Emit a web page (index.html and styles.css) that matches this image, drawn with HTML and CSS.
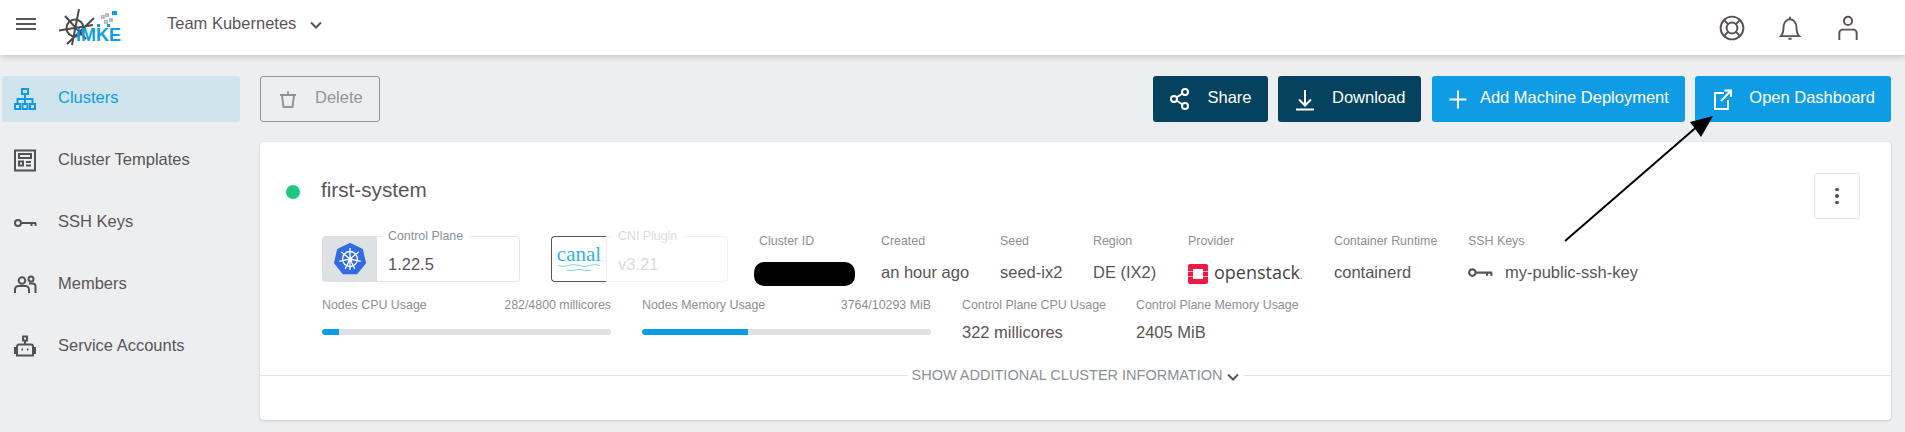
FILE: index.html
```html
<!DOCTYPE html>
<html lang="en">
<head>
    <meta charset="UTF-8">
    <title>Clusters</title>
    <link rel="stylesheet" href="styles.css">
</head>
<body>

<header class="topbar">
    <svg class="menu-icon" viewBox="0 0 20 12"><path d="M0 1h20M0 6h20M0 11h20"/></svg>
    <div class="logo">
        <svg class="logo-mark" viewBox="0 0 62 38">
            <circle cx="16" cy="19" r="8.500"/>
            <path d="M20 0L13 36M0 21.500L34 16M6 7L27 30M35 9L8 35"/>
            <g class="logo-pixels">
                <rect x="42" y="6" width="4" height="4"/>
                <rect x="46" y="4" width="4" height="4"/>
                <rect x="45" y="11" width="4" height="4"/>
                <rect x="50" y="9" width="4" height="4"/>
                <rect class="logo-blue" x="53" y="2" width="5" height="4"/>
                <rect class="logo-blue" x="38" y="15" width="3" height="3"/>
                <rect class="logo-blue" x="48" y="15" width="3" height="3"/>
            </g>
        </svg>
        <span class="logo-text">iMKE</span>
    </div>
    <div class="team">Team Kubernetes
        <svg class="team-chevron" viewBox="0 0 12 8"><path d="M1 1.500l5 5 5-5"/></svg>
    </div>
    <div class="topbar-icons">
        <svg viewBox="0 0 24 24"><circle cx="12" cy="12" r="10.500"/><circle cx="12" cy="12" r="5"/><path d="M5 5l3.500 3.500M19 5l-3.500 3.500M5 19l3.500-3.500M19 19l-3.500-3.500"/></svg>
        <svg viewBox="0 0 24 24"><path d="M3.500 19.500c2-2 2.500-3.500 2.500-8 0-4 2.500-7.500 6-7.500s6 3.500 6 7.500c0 4.500.5 6 2.500 8zM12 1.500V4M10.500 22h3"/></svg>
        <svg viewBox="0 0 24 24"><circle cx="12" cy="5.500" r="3.800"/><path d="M4 23v-6.500a3 3 0 0 1 3-3h10a3 3 0 0 1 3 3V23"/></svg>
    </div>
</header>

<div class="page">
    <nav class="sidebar">
        <a class="nav-item active">
            <svg viewBox="0 0 24 24"><path d="M9 2h6v5H9zM2 17h5v5H2zM9.500 17h5v5h-5zM17 17h5v5h-5zM12 7v10M4.500 17v-5h15v5"/></svg>
            Clusters
        </a>
        <a class="nav-item">
            <svg viewBox="0 0 24 24"><path d="M2 1.500h20v20H2zM6 5h12v4H6zM6 12.500h4v4H6zM13 13h5M13 16.500h5"/></svg>
            Cluster Templates
        </a>
        <a class="nav-item">
            <svg viewBox="0 0 24 24"><circle cx="5" cy="12" r="3"/><path d="M8 12h15M18.500 12v3M22.500 12v3"/></svg>
            SSH Keys
        </a>
        <a class="nav-item">
            <svg viewBox="0 0 24 24"><circle cx="9" cy="7.500" r="3.300"/><circle cx="18" cy="6" r="2.500"/><path d="M2 20v-3.500a3.500 3.500 0 0 1 3.500-3.500h7a3.500 3.500 0 0 1 3.500 3.500V20M16 10.500h3.500a3 3 0 0 1 3 3V20"/></svg>
            Members
        </a>
        <a class="nav-item">
            <svg viewBox="0 0 24 24"><path d="M10 1.500h4v4h-4zM12 5.500v4M6 9.500h12a2 2 0 0 1 2 2v9H4v-9a2 2 0 0 1 2-2zM4 13H2v5h2M20 13h2v5h-2M8.500 14.500h1.500M14 14.500h1.500"/></svg>
            Service Accounts
        </a>
    </nav>

    <main class="content">
        <div class="toolbar">
            <button class="btn btn-outline">
                <svg viewBox="0 0 24 24"><path d="M4 8h16M12 4.500V8M6 8l1.500 12h9L18 8"/></svg>
                Delete
            </button>
            <div class="toolbar-actions">
                <button class="btn btn-dark">
                    <svg viewBox="0 0 24 24"><circle cx="6" cy="12" r="3"/><circle cx="17" cy="5" r="3"/><circle cx="17" cy="19" r="3"/><path d="M8.500 10.500l6-4M8.500 13.500l6 4"/></svg>
                    Share
                </button>
                <button class="btn btn-dark">
                    <svg viewBox="0 0 24 24"><path d="M12 3v15M6 12.500l6 6 6-6M3 22.500h18"/></svg>
                    Download
                </button>
                <button class="btn btn-blue btn-add">
                    <svg viewBox="0 0 24 24"><path d="M12 3.500v18M3.500 12.500h17"/></svg>
                    Add Machine Deployment
                </button>
                <button class="btn btn-blue">
                    <svg viewBox="0 0 24 24"><path d="M14 6H5v16h13v-9M11 14L20.500 4M14.500 3.500h6.500V10"/></svg>
                    Open Dashboard
                </button>
            </div>
        </div>

        <section class="card">
            <div class="card-head">
                <span class="status-dot"></span>
                <h2 class="card-title">first-system</h2>
                <button class="kebab"><span></span><span></span><span></span></button>
            </div>

            <div class="detail-row">
                <div class="version-box">
                    <div class="version-logo k8s">
                        <svg viewBox="0 0 32 32">
                            <path class="k8s-shape" d="M16 1l12 5.800 3 13-8.300 10.400H9.300L1 19.800l3-13z"/>
                            <g class="k8s-wheel">
                                <circle cx="16" cy="16" r="7.500"/>
                                <circle cx="16" cy="16" r="1.500"/>
                                <path d="M16 5v22M16 16L24.600 9.100M16 16L26.700 18.400M16 16L20.800 25.900M16 16L11.200 25.900M16 16L5.300 18.400M16 16L7.400 9.100"/>
                            </g>
                        </svg>
                    </div>
                    <div class="version-field">
                        <span class="version-label">Control Plane</span>
                        <span class="version-value">1.22.5</span>
                    </div>
                </div>
                <div class="version-box faded">
                    <div class="version-logo canal">
                        <span class="canal-text">canal</span>
                        <svg class="canal-waves" viewBox="0 0 42 8"><path d="M0 1.500q5 2 10.500 0t10.500 0 10.500 0 10.500 0M9 6q4 1.500 8 0t8 0 8 0"/></svg>
                    </div>
                    <div class="version-field">
                        <span class="version-label">CNI Plugin</span>
                        <span class="version-value">v3.21</span>
                    </div>
                </div>
                <div class="cell cell-id">
                    <div class="cell-label">Cluster ID</div>
                    <div class="redacted"></div>
                </div>
                <div class="cell">
                    <div class="cell-label">Created</div>
                    <div class="cell-value">an hour ago</div>
                </div>
                <div class="cell">
                    <div class="cell-label">Seed</div>
                    <div class="cell-value">seed-ix2</div>
                </div>
                <div class="cell">
                    <div class="cell-label">Region</div>
                    <div class="cell-value">DE (IX2)</div>
                </div>
                <div class="cell">
                    <div class="cell-label">Provider</div>
                    <div class="cell-value provider">
                        <svg viewBox="0 0 20 20">
                            <path class="os-red" d="M2 0h16a2 2 0 0 1 2 2v16a2 2 0 0 1-2 2H2a2 2 0 0 1-2-2V2a2 2 0 0 1 2-2zM5 5v10h10V5z"/>
                            <path class="os-gap" d="M0 7.500h5M0 12.500h5M15 7.500h5M15 12.500h5"/>
                        </svg>
                        <span class="provider-name">openstack<small>.</small></span>
                    </div>
                </div>
                <div class="cell">
                    <div class="cell-label">Container Runtime</div>
                    <div class="cell-value">containerd</div>
                </div>
                <div class="cell">
                    <div class="cell-label">SSH Keys</div>
                    <div class="cell-value ssh-value">
                        <svg viewBox="1 7.800 23 8.300"><circle cx="5" cy="12" r="3"/><path d="M8 12h15M18.500 12v3M22.500 12v3"/></svg>
                        my-public-ssh-key
                    </div>
                </div>
            </div>

            <div class="usage-row">
                <div class="usage">
                    <div class="usage-head"><span>Nodes CPU Usage</span><span>282/4800 millicores</span></div>
                    <div class="bar"><div class="bar-fill" style="width: 5.9%"></div></div>
                </div>
                <div class="usage">
                    <div class="usage-head"><span>Nodes Memory Usage</span><span>3764/10293 MiB</span></div>
                    <div class="bar"><div class="bar-fill" style="width: 36.6%"></div></div>
                </div>
                <div class="cell">
                    <div class="cell-label">Control Plane CPU Usage</div>
                    <div class="usage-value">322 millicores</div>
                </div>
                <div class="cell">
                    <div class="cell-label">Control Plane Memory Usage</div>
                    <div class="usage-value">2405 MiB</div>
                </div>
            </div>

            <div class="more">
                <span class="more-text">SHOW ADDITIONAL CLUSTER INFORMATION</span>
                <svg viewBox="0 0 12 8"><path d="M1 1.500l5 5 5-5"/></svg>
            </div>
        </section>
    </main>
</div>

<svg class="annotation" viewBox="0 0 1905 432">
    <path class="annotation-line" d="M1565 241L1700 124"/>
    <path d="M1713 116L1690 122L1701 137z"/>
</svg>

</body>
</html>
```

FILE: styles.css
```css
* {
    box-sizing: border-box;
}
body {
    margin: 0;
    height: 432px;
    overflow: hidden;
    font-family: "Liberation Sans", Arial, sans-serif;
    font-size: 16.5px;
    color: #5a5457;
    background-color: #eceef0;
}
svg {
    fill: none;
    stroke: currentColor;
    stroke-width: 2;
}

/* top bar */
.topbar {
    display: flex;
    align-items: center;
    height: 55px;
    padding-left: 16px;
    background-color: white;
    box-shadow: 0 2px 6px rgba(0, 0, 0, 0.16);
    position: relative;
}
.menu-icon {
    width: 20px;
    height: 12px;
    margin-bottom: 7px;
}
.logo {
    position: relative;
    width: 62px;
    height: 38px;
    margin-left: 23px;
}
.logo-mark {
    width: 62px;
    height: 38px;
    color: #4a4a4a;
}
.logo-pixels {
    fill: #b6bcc2;
    stroke: none;
}
.logo-blue {
    fill: #0e9de5;
}
.logo-text {
    position: absolute;
    left: 17px;
    top: 15px;
    font-size: 18px;
    line-height: 22px;
    font-weight: bold;
    color: #0e9de5;
}
.team {
    display: flex;
    align-items: center;
    margin-left: 46px;
    padding-bottom: 8px;
}
.team-chevron {
    width: 12px;
    height: 8px;
    margin-left: 14px;
    margin-top: 2px;
}
.topbar-icons {
    display: flex;
    gap: 32px;
    margin-left: auto;
    margin-right: 44px;
    padding-top: 1px;
}
.topbar-icons svg {
    width: 26px;
    height: 26px;
    stroke-width: 1.800;
}

/* sidebar */
.page {
    display: flex;
}
.sidebar {
    display: flex;
    flex-direction: column;
    gap: 16px;
    width: 260px;
    padding: 21px 20px 0 2px;
}
.nav-item {
    display: flex;
    align-items: center;
    gap: 21px;
    height: 46px;
    padding-left: 11px;
    padding-bottom: 3px;
    border-radius: 3px;
}
.nav-item svg {
    width: 24px;
    height: 24px;
    margin-top: 3px;
    flex-shrink: 0;
    color: #4d5359;
}
.nav-item.active {
    background-color: #d0e4ee;
    color: #0e9de5;
}
.nav-item.active svg {
    color: #0e9de5;
}

/* content */
.content {
    flex: 1;
    padding: 21px 14px 0 0;
}
.toolbar {
    display: flex;
    justify-content: space-between;
    margin-bottom: 20px;
}
.toolbar-actions {
    display: flex;
    gap: 10.500px;
}
.btn {
    display: flex;
    align-items: center;
    gap: 15px;
    height: 46px;
    padding: 0 16px 3px 15px;
    border: none;
    border-radius: 3px;
    font-family: inherit;
    font-size: 16.500px;
    color: white;
}
.btn svg {
    width: 24px;
    height: 24px;
    margin-top: 2px;
    flex-shrink: 0;
}
.btn-add {
    gap: 10px;
    padding-left: 14px;
}
.btn-outline {
    border: 1px solid #8f959b;
    background-color: transparent;
    color: #8f959b;
}
.btn-dark {
    background-color: #04425f;
}
.btn-blue {
    background-color: #0e9de5;
}

/* cluster card */
.card {
    height: 278px;
    padding-top: 31px;
    background-color: white;
    border-radius: 4px;
    box-shadow: 0 1px 3px rgba(0, 0, 0, 0.15);
}
.card-head {
    display: flex;
    align-items: flex-start;
    height: 46px;
    padding: 0 31px 0 26px;
}
.status-dot {
    width: 14px;
    height: 14px;
    margin-top: 12px;
    border-radius: 50%;
    background-color: #1fc77f;
}
.card-title {
    margin: 5px 0 0 21px;
    font-size: 20.700px;
    line-height: 24px;
    font-weight: normal;
}
.kebab {
    display: flex;
    flex-direction: column;
    align-items: center;
    justify-content: center;
    gap: 3px;
    width: 46px;
    height: 46px;
    margin-left: auto;
    padding: 0;
    background-color: white;
    border: 1px solid #e1e3e5;
    border-radius: 3px;
}
.kebab span {
    width: 3.500px;
    height: 3.500px;
    border-radius: 50%;
    background-color: #5a5457;
}
.detail-row {
    display: grid;
    grid-template-columns: 229px 202px 128px 119px 93px 95px 146px 134px 1fr;
    height: 48px;
    margin: 15px 0 0 62px;
}
.version-box {
    display: flex;
    width: 198px;
    height: 46px;
    margin-top: 2px;
}
.version-box.faded {
    width: 177px;
}
.version-logo {
    display: flex;
    flex-direction: column;
    align-items: center;
    justify-content: center;
    width: 55px;
    flex-shrink: 0;
    border-radius: 4px 0 0 4px;
}
.version-logo.k8s {
    background-color: #dee1e4;
}
.version-logo.k8s svg {
    width: 32px;
    height: 32px;
}
.k8s-shape {
    fill: #326ce5;
    stroke: #326ce5;
}
.k8s-wheel {
    stroke: white;
    stroke-width: 1.300;
}
.version-logo.canal {
    border: 1px solid #5a5457;
    border-right: none;
    color: #2bb9d9;
}
.canal-text {
    font-family: "Liberation Serif", serif;
    font-size: 21px;
    line-height: 20px;
    margin-top: -3px;
}
.canal-waves {
    width: 42px;
    height: 8px;
    stroke-width: 1;
    opacity: 0.6;
}
.version-field {
    position: relative;
    flex: 1;
    padding: 17px 0 0 11px;
    border: 1px solid #e5e7e9;
    border-left: none;
    border-radius: 0 4px 4px 0;
}
.faded .version-field {
    border-left: 1px solid #e5e7e9;
    border-color: #eff0f1;
}
.version-label {
    position: absolute;
    left: 5px;
    top: -8px;
    padding: 0 6px;
    font-size: 12.400px;
    line-height: 14px;
    color: #8a9096;
    background-color: white;
}
.version-value {
    line-height: 20px;
}
.faded .version-label,
.faded .version-value {
    color: #d8dbde;
}
.cell-label {
    font-size: 12.400px;
    line-height: 14px;
    color: #8a9096;
}
.cell-value {
    margin-top: 14px;
    line-height: 20px;
}
.cell-id .cell-label {
    padding-left: 6px;
}
.redacted {
    width: 101px;
    height: 24px;
    margin: 14px 0 0 1px;
    border-radius: 10px;
    background-color: black;
}
.provider {
    display: flex;
    align-items: center;
    gap: 6px;
}
.provider svg {
    width: 20px;
    height: 20px;
    stroke: none;
}
.os-red {
    fill: #ed1944;
    fill-rule: evenodd;
}
.os-gap {
    stroke: white;
    stroke-width: 1.200;
    opacity: 0.6;
}
.provider-name {
    font-family: "Open Sans", sans-serif;
    font-size: 18px;
    font-weight: 500;
    color: #4a4345;
}
.provider-name small {
    font-size: 9px;
}
.ssh-value {
    display: flex;
    align-items: center;
    gap: 12px;
}
.ssh-value svg {
    width: 25px;
    height: 9px;
}
.usage-row {
    display: grid;
    grid-template-columns: 320px 320px 174px 1fr;
    margin: 16px 0 0 62px;
}
.usage {
    width: 289px;
}
.usage-head {
    display: flex;
    justify-content: space-between;
    font-size: 12.400px;
    line-height: 14px;
    color: #8a9096;
}
.bar {
    height: 6px;
    margin-top: 17px;
    border-radius: 3px;
    background-color: #dee1e4;
    overflow: hidden;
}
.bar-fill {
    height: 100%;
    background-color: #0e9de5;
}
.usage-value {
    margin-top: 10px;
    line-height: 20px;
}
.more {
    display: flex;
    align-items: center;
    margin-top: 23px;
    color: #8a9096;
    font-size: 14.500px;
    line-height: 20px;
}
.more::before,
.more::after {
    content: "";
    flex: 1;
    height: 1px;
    background-color: #e1e3e5;
}
.more-text {
    margin: 0 5px 0 4px;
}
.more svg {
    width: 12px;
    height: 8px;
    margin: 3px 4px 0 0;
    color: #5a5457;
}

/* arrow drawn over the screenshot */
.annotation {
    position: absolute;
    left: 0;
    top: 0;
    width: 1905px;
    height: 432px;
    fill: black;
    stroke: none;
}
.annotation-line {
    fill: none;
    stroke: black;
    stroke-width: 2;
}
```
